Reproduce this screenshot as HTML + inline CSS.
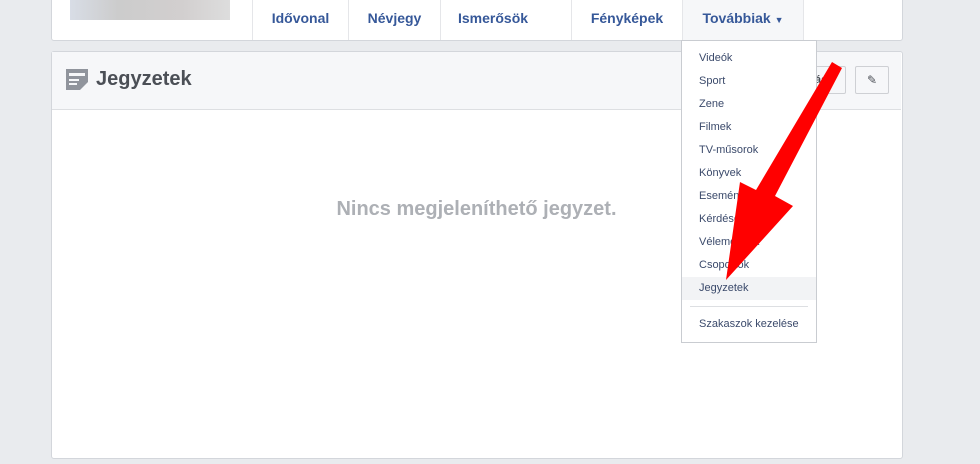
<!DOCTYPE html><html><head><meta charset="utf-8"><style>
body{margin:0;width:980px;height:464px;background:#e9ebee;font-family:"Liberation Sans",Arial,sans-serif;position:relative;overflow:hidden}
.card{position:absolute;background:#fff;border:1px solid #d3d6db;border-radius:3px}
.tab{position:absolute;top:0;height:40px;line-height:36px;font-weight:bold;font-size:14px;color:#365899;text-align:center;border-left:1px solid #e5e6e9}
.dd{position:absolute;left:681px;top:40px;width:134px;height:301px;background:#fff;border:1px solid #c9ccd1}
.dd div{height:23px;line-height:23px;padding-left:17px;font-size:11px;color:#3b4a6b}
</style></head><body>
<div class="card" style="left:51px;top:-3px;width:850px;height:42px"></div>
<div style="position:absolute;left:70px;top:0;width:160px;height:20px;background:linear-gradient(90deg,#d8dde6,#ccc 30%,#d2cfcf 70%,#ddd)"></div>
<div class="tab" style="left:252px;width:95px">Idővonal</div>
<div class="tab" style="left:348px;width:91px">Névjegy</div>
<div class="tab" style="left:440px;width:130px;text-align:left;padding-left:17px;box-sizing:border-box">Ismerősök</div>
<div class="tab" style="left:571px;width:110px">Fényképek</div>
<div class="tab" style="left:682px;width:120px;background:#f6f7f9;border-right:1px solid #e5e6e9">Továbbiak <span style="font-size:9px">▼</span></div>
<div class="card" style="left:51px;top:51px;width:850px;height:406px"></div>
<div style="position:absolute;left:52px;top:52px;width:849px;height:57px;background:#f6f7f9;border-bottom:1px solid #dddfe2"></div>
<svg style="position:absolute;left:66px;top:69px" width="22" height="21"><rect width="22" height="21" fill="#90949c"/><rect x="3" y="4" width="16" height="3" fill="#f6f7f9"/><rect x="3" y="10" width="10" height="2" fill="#f6f7f9"/><rect x="3" y="14" width="8" height="2" fill="#f6f7f9"/><path d="M14 21 L22 13 L22 21Z" fill="#f6f7f9"/></svg>
<div style="position:absolute;left:96px;top:68px;font-size:20px;font-weight:bold;color:#4b4f56">Jegyzetek</div>
<div style="position:absolute;left:800px;top:66px;width:44px;height:26px;border:1px solid #ced0d4;background:#f6f7f9;border-radius:2px;font-size:11px;font-weight:bold;color:#4b4f56;line-height:26px;text-indent:14px">ás</div>
<div style="position:absolute;left:855px;top:66px;width:32px;height:26px;border:1px solid #ced0d4;background:#f6f7f9;border-radius:2px;text-align:center;line-height:26px;font-size:12px;color:#4b4f56">✎</div>
<div style="position:absolute;left:52px;top:198px;width:849px;text-align:center;font-size:20px;font-weight:bold;color:#adb0b5">Nincs megjeleníthető jegyzet.</div>
<div class="dd"><div style="margin-top:6px">Videók</div><div>Sport</div><div>Zene</div><div>Filmek</div><div>TV-műsorok</div><div>Könyvek</div><div>Események</div><div>Kérdések</div><div>Vélemények</div><div>Csoportok</div><div style="background:#f2f3f5">Jegyzetek</div><div style="height:1px;background:#dddfe2;margin:6px 8px 6px 8px;padding:0"></div><div>Szakaszok kezelése</div></div>
<svg style="position:absolute;left:0;top:0" width="980" height="464"><polygon points="832,62 842,68 775,196 793,206 726,280 740,182 756,190" fill="#f00"/></svg>
</body></html>
